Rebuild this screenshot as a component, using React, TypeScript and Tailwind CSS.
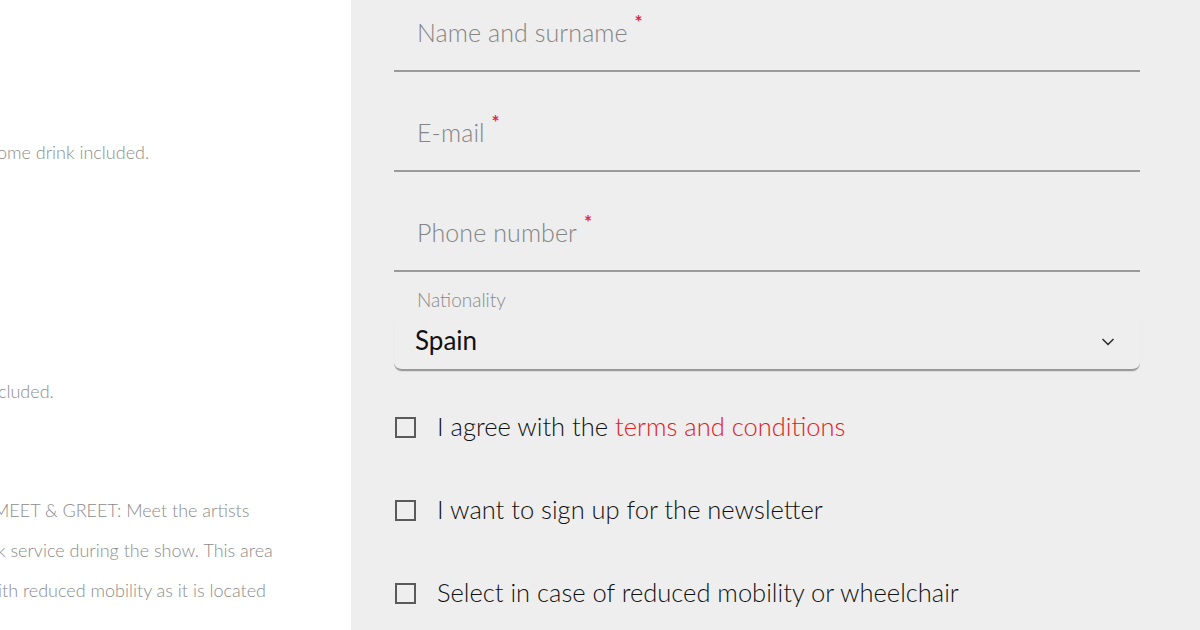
import { ChevronDown } from "lucide-react";

const font = { fontFamily: "Lato, 'Noto Sans', sans-serif" };

function TextField({ label }: { label: string }) {
  return (
    <div className="h-[100px] flex flex-col justify-end">
      <div className="flex-1 flex items-center pl-[23px] pt-[24px]">
        <span className="text-[25px] font-light text-[#858585] tracking-[0.1px] relative">
          {label}
          <span className="absolute -right-[15px] -top-[2px] text-[#e0284a] text-[19px] font-bold leading-none">*</span>
        </span>
      </div>
      <div className="h-[2px] bg-[#9a9a9a]" />
    </div>
  );
}

function Check({ children }: { children: React.ReactNode }) {
  return (
    <div className="flex items-center h-[83px]">
      <div className="w-[21px] h-[21px] border-2 border-[#5a5a5a] ml-[1px]" />
      <div className="ml-[21px] text-[25.5px] font-light text-[#111] leading-none pb-[2px]">{children}</div>
    </div>
  );
}

export default function App() {
  return (
    <div className="w-[1200px] h-[630px] flex overflow-hidden bg-white" style={font}>
      {/* left: ticket descriptions, cut off */}
      <div className="w-[351px] shrink-0 overflow-hidden text-[#8c8c8c] font-light text-[18px]">
        <p className="mt-[139px] -ml-[3px] whitespace-nowrap">ome drink included.</p>
        <p className="mt-[212px] -ml-[2px] whitespace-nowrap">cluded.</p>
        <div className="mt-[85px] leading-[40px] whitespace-nowrap">
          <p className="-ml-[7px]">MEET &amp; GREET: Meet the artists</p>
          <p className="-ml-[3px]">k service during the show. This area</p>
          <p className="-ml-[2px]">ith reduced mobility as it is located</p>
        </div>
      </div>

      {/* right: form */}
      <div className="flex-1 bg-[#eeeeee] pl-[43px] pr-[60px]">
        <div className="-mt-[28px]">
          <TextField label="Name and surname" />
          <TextField label="E-mail" />
          <TextField label="Phone number" />
        </div>

        <div className="pt-[18px]">
          <div className="pl-[23px] text-[19px] font-light text-[#8a8a8a] leading-none">Nationality</div>
          <div className="mt-[5px] h-[57px] rounded-b-[8px] rounded-tl-[10px] border-b-2 border-[#9a9a9a] shadow-[0_1px_1px_rgba(0,0,0,0.08)] flex items-center justify-between pl-[21px] pr-[22px]">
            <span className="text-[26px] text-[#111] font-normal pb-[2px]">Spain</span>
            <ChevronDown size={20} strokeWidth={2} className="text-[#333]" />
          </div>
        </div>

        <div className="mt-[15px]">
          <Check>
            I agree with the <span className="text-[#e02020]">terms and conditions</span>
          </Check>
          <Check>I want to sign up for the newsletter</Check>
          <Check>Select in case of reduced mobility or wheelchair</Check>
        </div>
      </div>
    </div>
  );
}
